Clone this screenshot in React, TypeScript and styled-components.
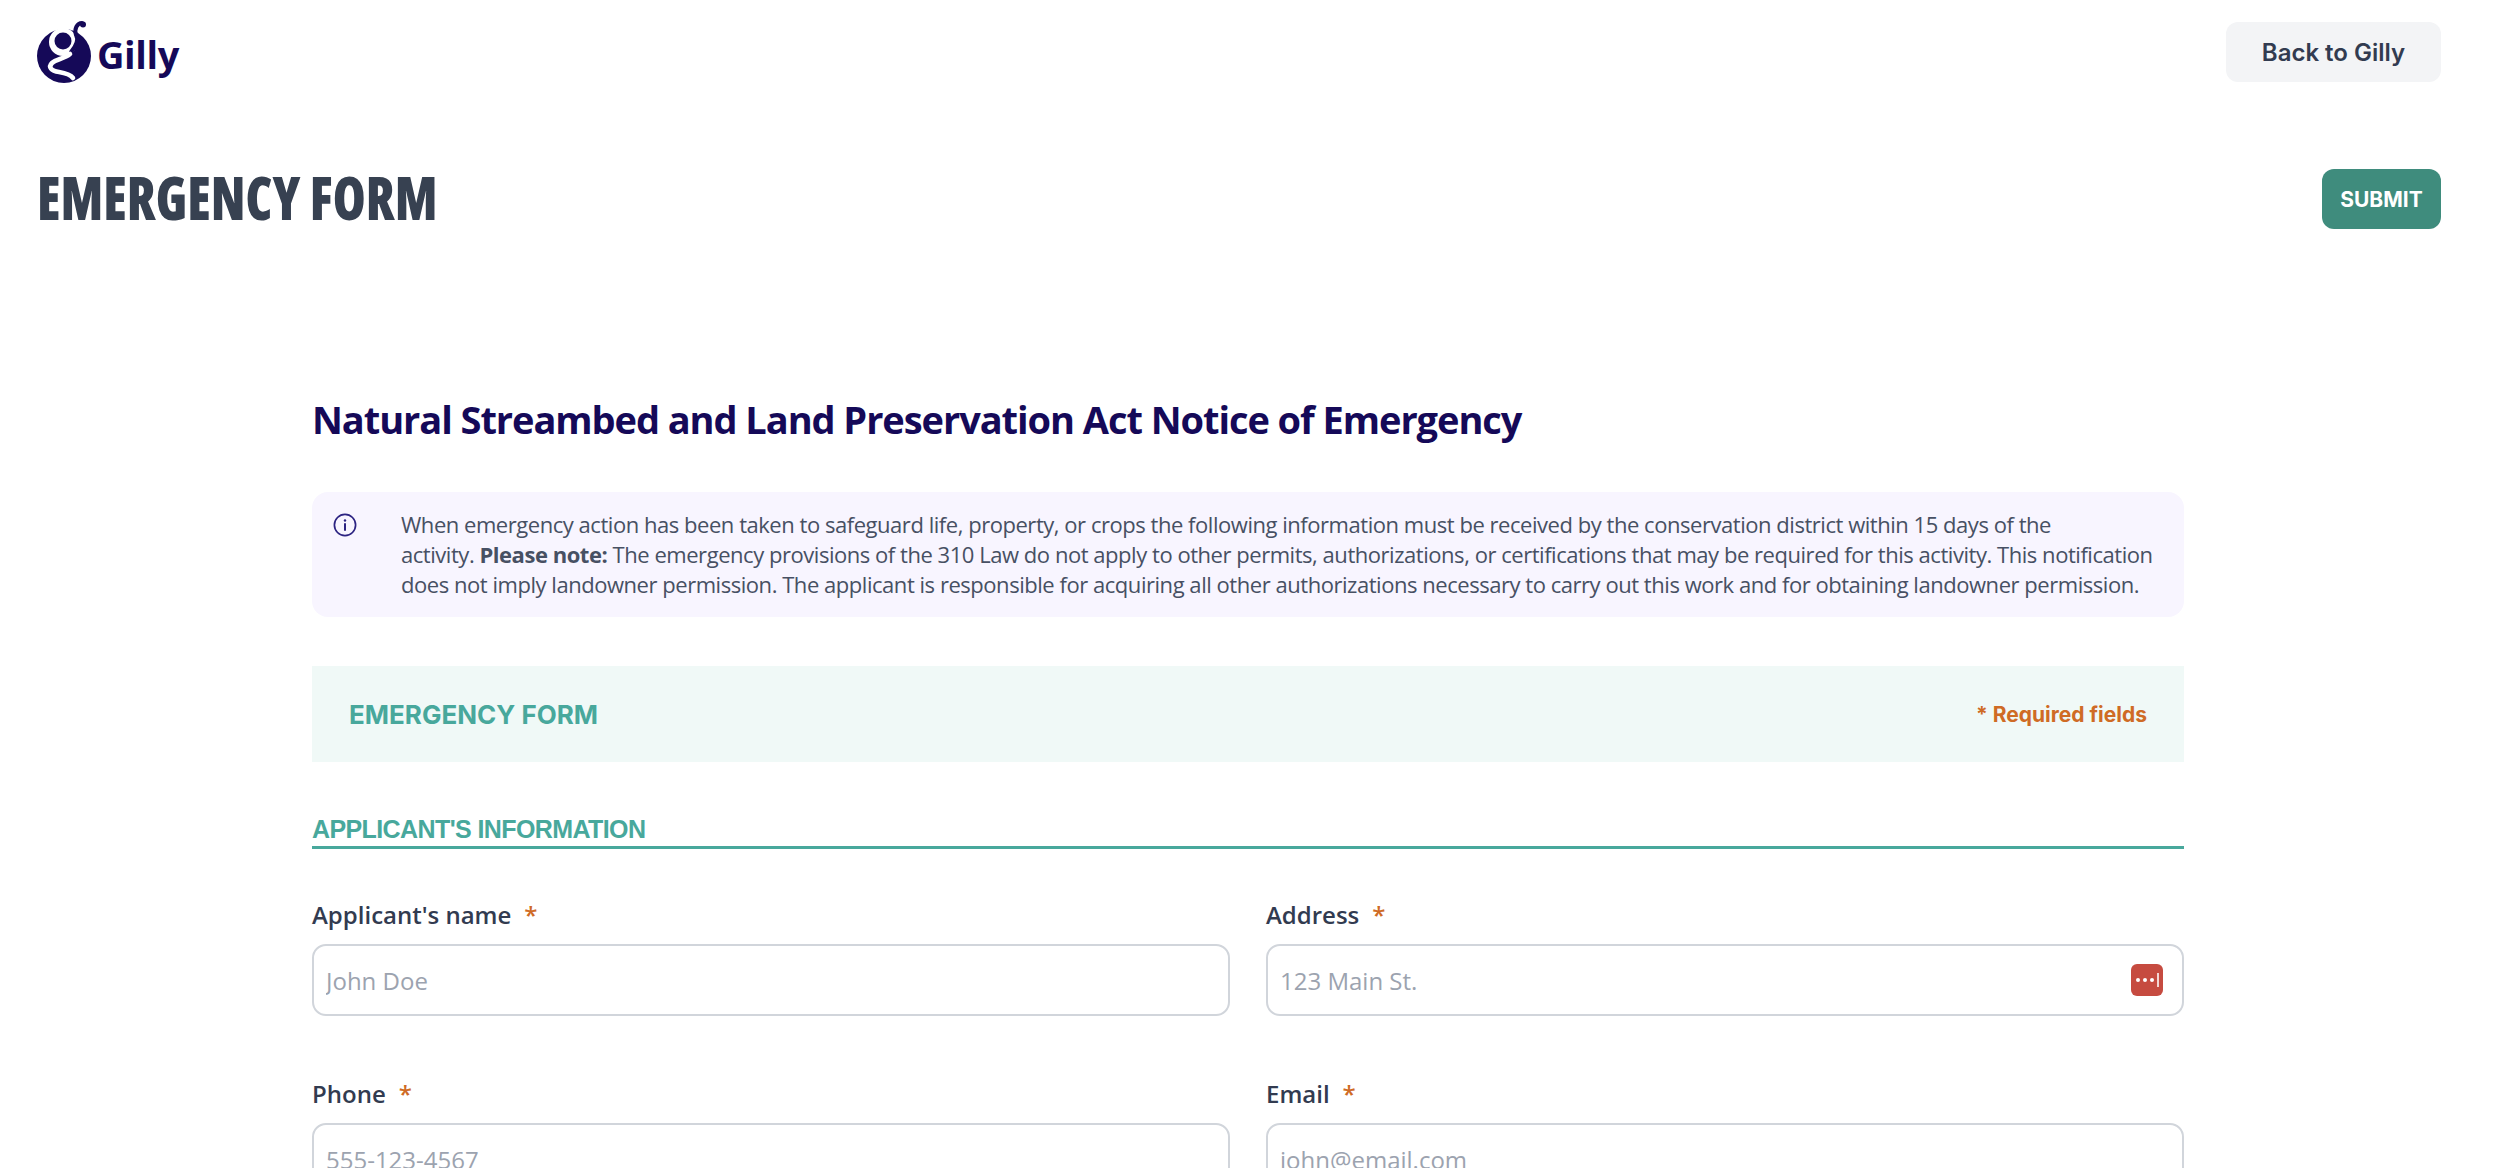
import styled, { createGlobalStyle } from 'styled-components'

const GlobalStyle = createGlobalStyle`
  html, body {
    margin: 0;
    padding: 0;
    height: 100%;
    overflow: hidden;
    background: #fff;
  }
  * { box-sizing: border-box; }
`

function LogoMark() {
  return (
    <svg width="56" height="62" viewBox="8 7 56 62" fill="none">
      <circle cx="35" cy="42" r="27" fill="#150958" />
      <circle cx="34" cy="28" r="14" fill="#fff" />
      <path d="M44 15 L62 11 L62 24 L51 18 Z" fill="#fff" />
      <circle cx="34" cy="27" r="8.5" fill="#150958" />
      <path d="M42 38 C47 32 50 26 47 21 C45 15 48 9 53 9" stroke="#150958" strokeWidth="4" strokeLinecap="round" />
      <circle cx="54" cy="10.5" r="3" fill="#150958" />
      <path d="M41 40 C35 45 27 45 23 49 C19 53 22 57 30 58 C36 59 41 60 44 64" stroke="#fff" strokeWidth="4.6" strokeLinecap="round" />
    </svg>
  )
}

function InfoIcon() {
  return (
    <svg width="24" height="24" viewBox="0 0 24 24" fill="none" stroke="#2c2382" strokeWidth="1.7" strokeLinecap="round">
      <circle cx="12" cy="12" r="10.6" />
      <path d="M12 11v6" strokeWidth="2" />
      <path d="M12 7.4v.2" strokeWidth="2.4" />
    </svg>
  )
}

function Field({ label, placeholder, keyIcon }: { label: string; placeholder: string; keyIcon?: boolean }) {
  return (
    <FieldBox>
      <Label>
        {label}
        <Star>*</Star>
      </Label>
      <InputWrap>
        <Input placeholder={placeholder} />
        {keyIcon && (
          <PassIcon>
            <Dot />
            <Dot />
            <Dot />
            <Caret />
          </PassIcon>
        )}
      </InputWrap>
    </FieldBox>
  )
}

export default function App() {
  return (
    <Page>
      <GlobalStyle />
      <TopBar>
        <Logo>
          <LogoMark />
          <LogoText>Gilly</LogoText>
        </Logo>
        <BackButton>Back to Gilly</BackButton>
      </TopBar>
      <TitleRow>
        <PageTitle>EMERGENCY FORM</PageTitle>
        <SubmitButton>SUBMIT</SubmitButton>
      </TitleRow>
      <Main>
        <Heading>Natural Streambed and Land Preservation Act Notice of Emergency</Heading>
        <Notice>
          <NoticeIcon>
            <InfoIcon />
          </NoticeIcon>
          <NoticeText>
            When emergency action has been taken to safeguard life, property, or crops the following information must be received by the conservation district within 15 days of the
            <br />
            activity. <b>Please note:</b> The emergency provisions of the 310 Law do not apply to other permits, authorizations, or certifications that may be required for this activity. This notification
            <br />
            does not imply landowner permission. The applicant is responsible for acquiring all other authorizations necessary to carry out this work and for obtaining landowner permission.
          </NoticeText>
        </Notice>
        <Banner>
          <BannerTitle>EMERGENCY FORM</BannerTitle>
          <Required>* Required fields</Required>
        </Banner>
        <SectionTitle>APPLICANT'S INFORMATION</SectionTitle>
        <FieldGrid>
          <Field label="Applicant's name" placeholder="John Doe" />
          <Field label="Address" placeholder="123 Main St." keyIcon />
          <Field label="Phone" placeholder="555-123-4567" />
          <Field label="Email" placeholder="john@email.com" />
        </FieldGrid>
      </Main>
    </Page>
  )
}

const Page = styled.div`
  height: 1168px;
  overflow: hidden;
  padding: 22px 59px 0 37px;
  font-family: "Open Sans", sans-serif;
`

const TopBar = styled.header`
  display: flex;
  justify-content: space-between;
  align-items: center;
  height: 60px;
`

const Logo = styled.div`
  display: flex;
  align-items: center;
  gap: 4px;
`

const LogoText = styled.span`
  font-size: 38px;
  font-weight: 700;
  color: #150958;
  line-height: 1;
  margin-top: 4px;
  letter-spacing: -0.4px;
`

const BackButton = styled.button`
  width: 215px;
  height: 60px;
  border: none;
  border-radius: 12px;
  background: #f3f4f6;
  color: #323b50;
  font-family: Inter, sans-serif;
  font-size: 24px;
  font-weight: 600;
`

const TitleRow = styled.div`
  display: flex;
  justify-content: space-between;
  align-items: center;
  height: 60px;
  margin-top: 87px;
`

const PageTitle = styled.h1`
  margin: 0 0 6px;
  font-family: "Open Sans", sans-serif;
  font-stretch: 75%;
  font-size: 61px;
  font-weight: 800;
  color: #374151;
  line-height: 1;
  transform: scaleX(0.87);
  transform-origin: left center;
`

const SubmitButton = styled.button`
  width: 119px;
  height: 60px;
  border: none;
  border-radius: 12px;
  background: #3f8c7d;
  color: #fff;
  font-family: Inter, sans-serif;
  font-size: 21px;
  font-weight: 700;
`

const Main = styled.main`
  width: 1872px;
  margin: 164px 0 0 275px;
`

const Heading = styled.h2`
  margin: 0;
  font-size: 38px;
  letter-spacing: -1.06px;
  font-weight: 700;
  line-height: 52px;
  color: #150958;
`

const Notice = styled.div`
  display: flex;
  margin-top: 47px;
  padding: 17px 10px 18px 21px;
  border-radius: 16px;
  background: #f8f5ff;
`

const NoticeIcon = styled.div`
  flex: 0 0 68px;
  padding-top: 4px;
  line-height: 0;
`

const NoticeText = styled.p`
  margin: 0;
  font-size: 22px;
  letter-spacing: -0.46px;
  line-height: 30px;
  color: #475063;

  b {
    font-weight: 700;
  }
`

const Banner = styled.div`
  display: flex;
  justify-content: space-between;
  align-items: center;
  height: 96px;
  margin-top: 49px;
  padding: 0 37px;
  background: #f0f9f7;
`

const BannerTitle = styled.h3`
  margin: 0;
  font-family: Inter, sans-serif;
  font-size: 26px;
  font-weight: 700;
  color: #48a89c;
`

const Required = styled.span`
  font-family: Inter, sans-serif;
  font-size: 21px;
  font-weight: 700;
  color: #cf6b25;
`

const SectionTitle = styled.h4`
  margin: 51px 0 0;
  padding-bottom: 1px;
  border-bottom: 3px solid #48a89c;
  font-family: "Liberation Sans", sans-serif;
  font-size: 25px;
  font-weight: 700;
  letter-spacing: -0.6px;
  line-height: 32px;
  color: #48a89c;
`

const FieldGrid = styled.div`
  display: grid;
  grid-template-columns: 1fr 1fr;
  column-gap: 36px;
  row-gap: 61px;
  margin-top: 49px;
`

const FieldBox = styled.div`
  display: flex;
  flex-direction: column;
  gap: 12px;
`

const Label = styled.label`
  font-size: 24px;
  font-weight: 600;
  line-height: 34px;
  color: #323b50;
`

const Star = styled.span`
  margin-left: 13px;
  color: #cf6b25;
`

const InputWrap = styled.div`
  position: relative;
`

const Input = styled.input`
  display: block;
  width: 100%;
  height: 72px;
  padding: 0 12px;
  border: 2px solid #d1d5db;
  border-radius: 14px;
  background: #fff;
  font-family: "Open Sans", sans-serif;
  font-size: 24px;
  color: #323b50;
  outline: none;

  &::placeholder {
    color: #9ca3af;
    opacity: 1;
  }
`

const PassIcon = styled.span`
  position: absolute;
  top: 20px;
  right: 21px;
  display: flex;
  align-items: center;
  justify-content: center;
  gap: 3px;
  width: 32px;
  height: 32px;
  border-radius: 6px;
  background: #c64b40;
`

const Dot = styled.i`
  width: 4px;
  height: 4px;
  border-radius: 50%;
  background: #fff;
`

const Caret = styled.i`
  width: 2px;
  height: 14px;
  background: #f3d6d3;
`
